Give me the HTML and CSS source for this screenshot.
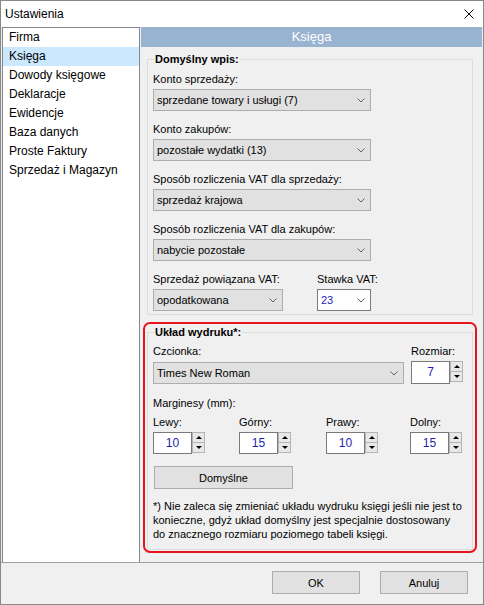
FILE: index.html
```html
<!DOCTYPE html>
<html lang="pl">
<head>
<meta charset="utf-8">
<title>Ustawienia</title>
<link rel="stylesheet" href="styles.css">
</head>
<body>
<div class="window">
  <div class="titlebar">
    <span class="title">Ustawienia</span>
    <svg class="close" width="10" height="10" viewBox="0 0 10 10"><path d="M0.5 0.5L9.5 9.5M9.5 0.5L0.5 9.5" stroke="#000" stroke-width="1" fill="none"/></svg>
  </div>
  <div class="main">
    <ul class="nav">
      <li>Firma</li>
      <li class="active">Księga</li>
      <li>Dowody księgowe</li>
      <li>Deklaracje</li>
      <li>Ewidencje</li>
      <li>Baza danych</li>
      <li>Proste Faktury</li>
      <li>Sprzedaż i Magazyn</li>
    </ul>
    <div class="content">
      <div class="header">Księga</div>
      <div class="group g1">
        <div class="legend">Domyślny wpis:</div>
        <div class="lbl first">Konto sprzedaży:</div>
        <div class="select w-full"><span>sprzedane towary i usługi (7)</span><svg class="chev" width="8" height="5" viewBox="0 0 8 5"><path d="M0.5 0.5L4 4L7.5 0.5" stroke="#606060" fill="none"/></svg></div>
        <div class="lbl">Konto zakupów:</div>
        <div class="select w-full"><span>pozostałe wydatki (13)</span><svg class="chev" width="8" height="5" viewBox="0 0 8 5"><path d="M0.5 0.5L4 4L7.5 0.5" stroke="#606060" fill="none"/></svg></div>
        <div class="lbl">Sposób rozliczenia VAT dla sprzedaży:</div>
        <div class="select w-full"><span>sprzedaż krajowa</span><svg class="chev" width="8" height="5" viewBox="0 0 8 5"><path d="M0.5 0.5L4 4L7.5 0.5" stroke="#606060" fill="none"/></svg></div>
        <div class="lbl">Sposób rozliczenia VAT dla zakupów:</div>
        <div class="select w-full"><span>nabycie pozostałe</span><svg class="chev" width="8" height="5" viewBox="0 0 8 5"><path d="M0.5 0.5L4 4L7.5 0.5" stroke="#606060" fill="none"/></svg></div>
        <div class="row5">
          <div class="col-a">
            <div class="lbl">Sprzedaż powiązana VAT:</div>
            <div class="select"><span>opodatkowana</span><svg class="chev" width="8" height="5" viewBox="0 0 8 5"><path d="M0.5 0.5L4 4L7.5 0.5" stroke="#606060" fill="none"/></svg></div>
          </div>
          <div class="col-b">
            <div class="lbl">Stawka VAT:</div>
            <div class="select white"><span class="num">23</span><svg class="chev" width="8" height="5" viewBox="0 0 8 5"><path d="M0.5 0.5L4 4L7.5 0.5" stroke="#606060" fill="none"/></svg></div>
          </div>
        </div>
      </div>
      <div class="redbox">
        <div class="group g2">
          <div class="legend">Układ wydruku*:</div>
          <div class="font-row">
            <div class="font-col">
              <div class="lbl small-top">Czcionka:</div>
              <div class="select font-select"><span>Times New Roman</span><svg class="chev" width="8" height="5" viewBox="0 0 8 5"><path d="M0.5 0.5L4 4L7.5 0.5" stroke="#606060" fill="none"/></svg></div>
            </div>
            <div class="size-col">
              <div class="lbl small-top">Rozmiar:</div>
              <div class="spin tall">
                <div class="spin-input">7</div>
                <div class="spinner"><div class="sb"><i class="up"></i></div><div class="sb"><i class="down"></i></div></div>
              </div>
            </div>
          </div>
          <div class="lbl margins-title">Marginesy (mm):</div>
          <div class="margins">
            <div class="m-col">
              <div class="lbl m-lbl">Lewy:</div>
              <div class="spin"><div class="spin-input">10</div><div class="spinner"><div class="sb"><i class="up"></i></div><div class="sb"><i class="down"></i></div></div></div>
            </div>
            <div class="m-col">
              <div class="lbl m-lbl">Górny:</div>
              <div class="spin"><div class="spin-input">15</div><div class="spinner"><div class="sb"><i class="up"></i></div><div class="sb"><i class="down"></i></div></div></div>
            </div>
            <div class="m-col">
              <div class="lbl m-lbl">Prawy:</div>
              <div class="spin"><div class="spin-input">10</div><div class="spinner"><div class="sb"><i class="up"></i></div><div class="sb"><i class="down"></i></div></div></div>
            </div>
            <div class="m-col">
              <div class="lbl m-lbl">Dolny:</div>
              <div class="spin"><div class="spin-input">15</div><div class="spinner"><div class="sb"><i class="up"></i></div><div class="sb"><i class="down"></i></div></div></div>
            </div>
          </div>
          <button class="btn default-btn">Domyślne</button>
          <p class="note">*) Nie zaleca się zmieniać układu wydruku księgi jeśli nie jest to<br>konieczne, gdyż układ domyślny jest specjalnie dostosowany<br>do znacznego rozmiaru poziomego tabeli księgi.</p>
        </div>
      </div>
    </div>
  </div>
  <div class="footer">
    <button class="btn dlg-btn">OK</button>
    <button class="btn dlg-btn">Anuluj</button>
  </div>
</div>
</body>
</html>
```

FILE: styles.css
```css
* { box-sizing: border-box; }

body {
  margin: 0;
  font: 11px "Liberation Sans", Arial, sans-serif;
  color: #000;
  background: #fff;
}

.window {
  width: 484px;
  height: 605px;
  border: 1px solid #888;
  background: #f0f0f0;
  display: flex;
  flex-direction: column;
  overflow: hidden;
}

.titlebar {
  height: 26px;
  flex: none;
  background: #fff;
  display: flex;
  align-items: center;
  justify-content: space-between;
  padding: 0 9px 0 4px;
}

.title { font-size: 12px; line-height: 16px; }

.close { display: block; }

.main {
  height: 536px;
  flex: none;
  display: flex;
  gap: 1px;
  padding: 0 1px;
  border-bottom: 1px solid #a0a0a0;
}

.nav {
  width: 138px;
  flex: none;
  margin: 0;
  padding: 0;
  list-style: none;
  background: #fff;
  border: 1px solid #828790;
  border-bottom: none;
  font-size: 12px;
}

.nav li {
  height: 19px;
  line-height: 19px;
  padding-left: 6px;
  white-space: nowrap;
}

.nav li.active { background: #cce8ff; }

.content {
  width: 341px;
  min-width: 0;
  flex: none;
  display: flex;
  flex-direction: column;
}

.header {
  height: 20px;
  line-height: 20px;
  background: #99b4d1;
  color: #fff;
  text-align: center;
  font-size: 13px;
}

.group {
  border: 1px solid #dcdcdc;
}

.g1 {
  margin: 12px 9px 0 6px;
  padding: 0 5px 3px;
}

.legend {
  margin: -8px 0 0 1px;
  padding: 0 1px;
  width: max-content;
  background: #f0f0f0;
  font-weight: bold;
  line-height: 14px;
}

.lbl {
  line-height: 15px;
  margin-top: 11px;
  white-space: nowrap;
}

.lbl.first { margin-top: 6px; }

.select {
  height: 22px;
  margin-top: 2px;
  border: 1px solid #adadad;
  background: #e1e1e1;
  display: flex;
  align-items: center;
  justify-content: space-between;
  padding: 0 5px 0 3px;
  white-space: nowrap;
}

.select .chev { display: block; flex: none; }

.w-full { width: 218px; }

.row5 { display: flex; }

.col-a { width: 130px; }

.col-b { width: 54px; margin-left: 34px; }

.select.white {
  background: #fff;
  border-color: #7a7a7a;
}

.num { color: #1e1eb4; }

.redbox {
  margin: 7px 5px 0 2px;
  border: 2px solid #e8141c;
  border-radius: 7px;
  padding: 8px 2px 1px;
}

.g2 { padding: 0 5px 8px; }

.font-row { display: flex; gap: 7px; }

.font-col { width: 251px; }

.lbl.small-top { margin-top: 5px; }

.font-select { margin-top: 3px; }

.spin {
  display: flex;
  margin-top: 2px;
}

.spin-input {
  width: 39px;
  height: 22px;
  border: 1px solid #7a7a7a;
  background: #fff;
  color: #1e1eb4;
  text-align: center;
  line-height: 20px;
  font-size: 12px;
}

.spin.tall .spin-input { height: 23px; line-height: 21px; }

.spinner {
  width: 13px;
  display: flex;
  flex-direction: column;
}

.sb {
  height: 11px;
  border: 1px solid #b4b4b4;
  background: #e8e8e8;
  display: flex;
  align-items: center;
  justify-content: center;
}

.sb + .sb { margin-top: -1px; }

.up, .down {
  display: block;
  width: 0;
  height: 0;
  border-left: 3px solid transparent;
  border-right: 3px solid transparent;
}

.up { border-bottom: 3px solid #000; }

.down { border-top: 3px solid #000; }

.lbl.margins-title { margin-top: 12px; }

.margins {
  display: grid;
  grid-template-columns: 86px 87px 84px auto;
}

.lbl.m-lbl { margin-top: 4px; }

.btn {
  font: 11px "Liberation Sans", Arial, sans-serif;
  color: #000;
  background: #e1e1e1;
  border: 1px solid #adadad;
  border-radius: 0;
  padding: 0;
  height: 23px;
}

.default-btn {
  display: block;
  width: 139px;
  margin: 12px 0 0 1px;
}

.note {
  margin: 10px 0 0;
  line-height: 14px;
  white-space: nowrap;
}

.footer {
  flex: 1;
  display: flex;
  justify-content: flex-end;
  align-items: flex-start;
  gap: 20px;
  padding: 8px 15px 0 0;
}

.dlg-btn { width: 88px; }
```
